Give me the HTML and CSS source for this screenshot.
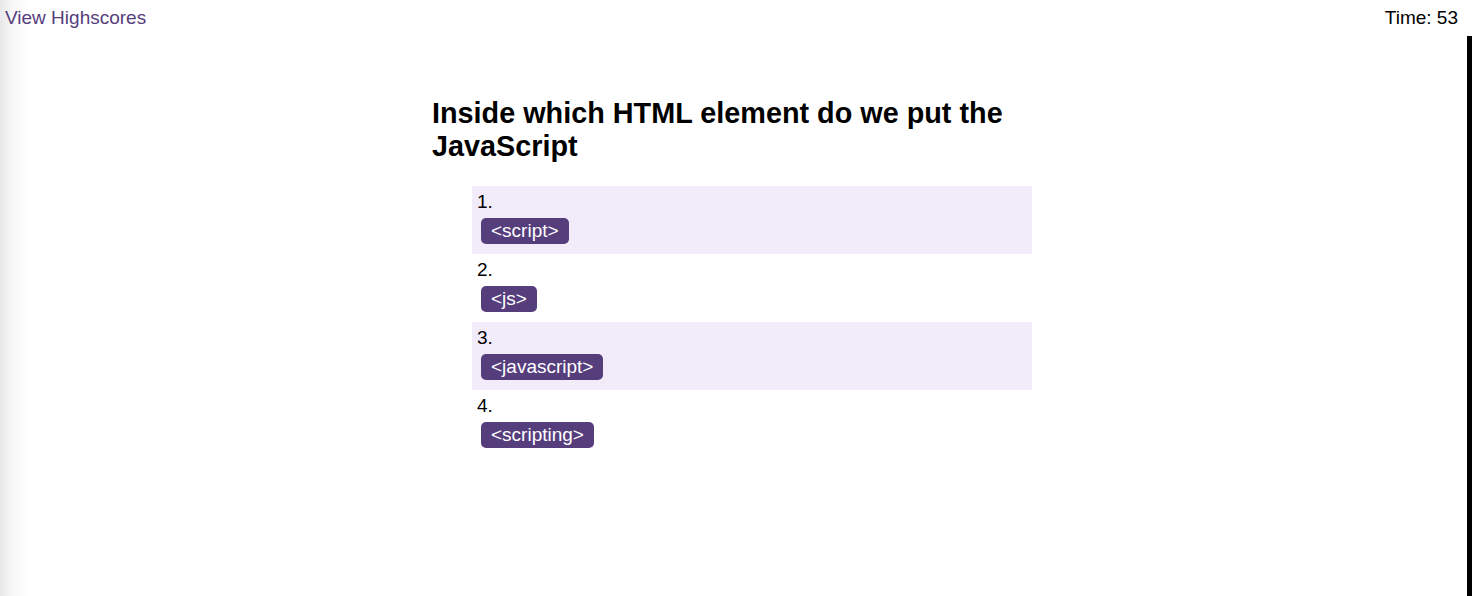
FILE: index.html
```html
<!DOCTYPE html>
<html lang="en">
<head>
<meta charset="utf-8">
<title>Code Quiz</title>
<link rel="stylesheet" href="styles.css">
</head>
<body>
<header class="top-bar">
  <a class="highscores-link" href="#">View Highscores</a>
  <div class="timer">Time: 53</div>
</header>
<main class="stage">
  <section class="quiz">
    <h2 class="question">Inside which HTML element do we put the JavaScript</h2>
    <ol class="choices">
      <li class="choice"><div class="choice-num">1.</div><button class="choice-btn">&lt;script&gt;</button></li>
      <li class="choice"><div class="choice-num">2.</div><button class="choice-btn">&lt;js&gt;</button></li>
      <li class="choice"><div class="choice-num">3.</div><button class="choice-btn">&lt;javascript&gt;</button></li>
      <li class="choice"><div class="choice-num">4.</div><button class="choice-btn">&lt;scripting&gt;</button></li>
    </ol>
  </section>
</main>
</body>
</html>
```
FILE: styles.css
```css
html, body {
  height: 100%;
}
body {
  margin: 0;
  font-family: "Liberation Sans", Arial, sans-serif;
  color: #000;
  background: linear-gradient(to right, #e8e8e8 0, #f7f7f7 12px, #ffffff 30px);
  display: flex;
  flex-direction: column;
}
.top-bar {
  height: 36px;
  box-sizing: border-box;
  padding: 7px 14px 0 5px;
  display: flex;
  justify-content: space-between;
  align-items: flex-start;
  font-size: 19px;
  line-height: 22px;
}
.highscores-link {
  color: #563d7c;
  text-decoration: none;
}
.timer {
  color: #000;
}
.stage {
  flex: 1;
  border-right: 5px solid #000;
  padding-right: 3px;
}
.quiz {
  width: 600px;
  margin: 61px auto 0;
}
.question {
  margin: 0 0 23px;
  font-size: 28.8px;
  line-height: 33px;
  font-weight: bold;
  padding-right: 20px;
}
.choices {
  list-style: none;
  margin: 0;
  padding: 0 0 0 40px;
}
.choice {
  padding: 5px;
  font-size: 19px;
  line-height: 21px;
}
.choice:nth-child(odd) {
  background: #f2ecfa;
}
.choice-num {
  height: 21px;
}
.choice-btn {
  display: inline-block;
  margin: 6px 0 5px 4px;
  padding: 2px 10px 2px;
  border: 0;
  border-radius: 5px;
  background: #563d7c;
  color: #fff;
  font-family: "Liberation Sans", Arial, sans-serif;
  font-size: 19px;
  line-height: 22px;
  height: 26px;
  vertical-align: top;
}
```
